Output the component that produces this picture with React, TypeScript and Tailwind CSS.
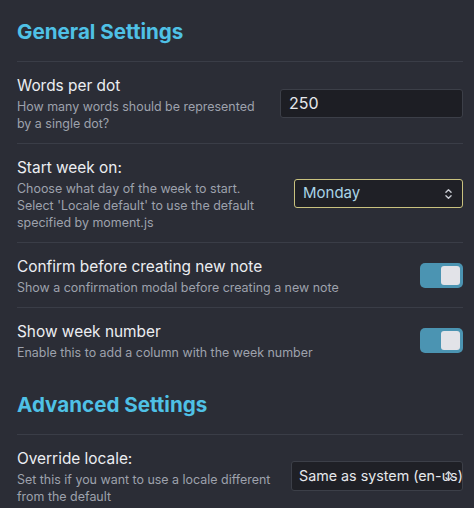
import React from 'react';

const Toggle: React.FC = () => (
  <div className="flex h-[25px] w-[43px] shrink-0 items-center justify-end rounded-[5px] bg-[#4b94b2] pr-[3px]">
    <div className="h-[19px] w-[19px] rounded-[3px] bg-[#e2e3e8]" />
  </div>
);

const Chevrons: React.FC = () => (
  <svg viewBox="0 0 10 14" className="h-[12px] w-[9px]" fill="none" stroke="#c9ccd3" strokeWidth="1.6" strokeLinecap="round" strokeLinejoin="round">
    <path d="M2 5 L5 2 L8 5" />
    <path d="M2 9 L5 12 L8 9" />
  </svg>
);

interface RowProps {
  title: string;
  desc: string[];
  border?: boolean;
  children: React.ReactNode;
}

const Row: React.FC<RowProps> = ({ title, desc, border = true, children }) => (
  <div className={`flex items-center justify-between gap-3 pt-[12px] pb-[11px] ${border ? 'border-b border-[#3a3d47]' : ''}`}>
    <div className="flex flex-col whitespace-nowrap">
      <div className="text-[15.4px] leading-[24px] text-[#eceef2]">{title}</div>
      <div className="text-[12.45px] leading-[17px] text-[#9ea2ad]">
        {desc.map((d) => (
          <div key={d}>{d}</div>
        ))}
      </div>
    </div>
    {children}
  </div>
);

export default function App() {
  return (
    <div className="h-[508px] w-full overflow-hidden bg-[#2b2d36] pl-[17px] pr-[11px] font-['Inter',sans-serif]">
      <h2 className="border-b border-[#3a3d47] pt-[17px] pb-[14px] text-[20.6px] font-bold leading-[30px] text-[#4fc1e6]">
        General Settings
      </h2>

      <Row title="Words per dot" desc={['How many words should be represented', 'by a single dot?']}>
        <div className="flex h-[29px] w-[183px] shrink-0 items-center rounded-[3px] border border-[#3c3f48] bg-[#1d1e24] px-[8px] text-[16px] text-[#e6e8ec]">
          250
        </div>
      </Row>

      <Row
        title="Start week on:"
        desc={['Choose what day of the week to start.', "Select 'Locale default' to use the default", 'specified by moment.js']}
      >
        <div className="flex h-[29px] w-[169px] shrink-0 items-center justify-between rounded-[3px] border border-[#c9c27f] bg-[#1f2026] pl-[8px] pr-[9px] text-[15px] text-[#a9d4e6]">
          <span>Monday</span>
          <Chevrons />
        </div>
      </Row>

      <Row title="Confirm before creating new note" desc={['Show a confirmation modal before creating a new note']}>
        <Toggle />
      </Row>

      <Row title="Show week number" desc={['Enable this to add a column with the week number']} border={false}>
        <Toggle />
      </Row>

      <h2 className="border-b border-[#3a3d47] pt-[18px] pb-[14px] text-[20.6px] font-bold leading-[30px] text-[#4fc1e6]">
        Advanced Settings
      </h2>

      <Row title="Override locale:" desc={['Set this if you want to use a locale different', 'from the default']} border={false}>
        <div className="relative flex h-[30px] w-[172px] shrink-0 items-center overflow-hidden rounded-[3px] border border-[#3c3f48] bg-[#1f2026] pl-[7px] text-[14.3px] whitespace-nowrap text-[#e6e8ec]">
          <span>Same as system (en-us)</span>
          <div className="absolute right-[9px] top-1/2 -translate-y-1/2">
            <Chevrons />
          </div>
        </div>
      </Row>
    </div>
  );
}
